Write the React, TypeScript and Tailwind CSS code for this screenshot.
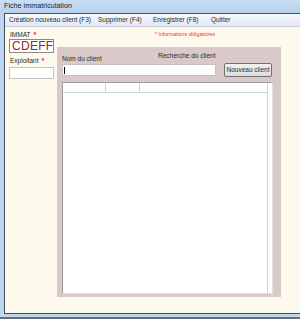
const MENU = [
  { label: "Création nouveau client (F3)", w: "w-[89px]" },
  { label: "Supprimer (F4)", w: "w-[55px]" },
  { label: "Enregistrer (F8)", w: "w-[58px]" },
  { label: "Quitter", w: "w-[40px]" },
];

function Required({ label }: { label: string }) {
  return (
    <div className="flex items-center gap-[3px] text-[6.5px] leading-[8px] text-[#2a2a2a]">
      <span>{label}</span>
      <span className="text-[7px] font-bold text-[#e8202a]">*</span>
    </div>
  );
}

export default function App() {
  return (
    <div
      className="w-[300px] h-[319px] overflow-hidden flex flex-col bg-[#bdd5ee]"
      style={{ fontFamily: '"Liberation Sans", Arial, sans-serif' }}
    >
      {/* Title bar */}
      <div className="h-[13px] flex items-center pl-[4px] text-[7.2px] text-[#222] bg-gradient-to-b from-[#c9def4] to-[#b8d0ea]">
        Fiche immatriculation
      </div>

      <div className="flex-1 flex pl-[4px] min-h-0">
        <div className="flex-1 flex flex-col border-l border-t border-b border-[#44505e] min-h-0">
          {/* Menu bar */}
          <div className="h-[13px] flex items-center pl-[4px] text-[6.5px] text-[#2a2a2a] bg-gradient-to-b from-[#f5f7fc] to-[#e3e8f3] border-b border-[#c9cfdc]">
            {MENU.map((m) => (
              <span key={m.label} className={`${m.w} shrink-0 whitespace-nowrap`}>
                {m.label}
              </span>
            ))}
          </div>

          {/* Content */}
          <div className="flex-1 flex bg-[#fdf9ec] min-h-0">
            {/* Left column */}
            <div className="w-[49px] shrink-0 pl-[4px] pt-[4px] flex flex-col">
              <div className="pl-[1px]">
                <Required label="IMMAT" />
              </div>
              <div className="w-[45px] h-[14px] bg-white border border-[#8a8a8a] flex items-center pl-[2px] text-[12px] leading-none tracking-[0.3px] text-[#9b2530]">
                CDEFF
              </div>
              <div className="pl-[1px] mt-[4px]">
                <Required label="Exploitant" />
              </div>
              <div className="mt-[2px] w-[45px] h-[12px] bg-white border border-[#c4c4c4]" />
            </div>

            {/* Right area */}
            <div className="w-[227px] shrink-0 pl-[3px] flex flex-col">
              <div className="h-[20px] pt-[4px] pl-[98px] text-[5.2px] text-[#ff2a2a] whitespace-nowrap">
                * Informations obligatoires
              </div>

              <div className="w-[224px] h-[250px] bg-[#d9c9c9] pl-[5px] pt-[5px] flex flex-col">
                <div className="flex h-[11px]">
                  <div className="w-[96px] self-end text-[6.5px] leading-[8px] text-[#2a2a2a]">
                    Nom du client
                  </div>
                  <div className="self-start text-[6.5px] leading-[8px] text-[#2a2a2a]">
                    Recherche du client
                  </div>
                </div>

                <div className="flex items-center h-[14px]">
                  <div className="w-[154px] h-[12px] bg-white border border-[#c8c0c0] flex items-center pl-[1px]">
                    <div className="w-px h-[7px] bg-black" />
                  </div>
                  <div className="ml-[8px] w-[48px] h-[14px] rounded-[2px] border border-[#707070] bg-gradient-to-b from-[#f2f2f2] to-[#dcdcdc] flex items-center justify-center text-[6.5px] text-[#2a2a2a]">
                    Nouveau client
                  </div>
                </div>

                {/* List */}
                <div className="mt-[5px] w-[211px] h-[212px] bg-white border-t border-l border-[#9c9c9c] border-r border-b border-r-[#e4e0e0] border-b-[#e4e0e0] flex">
                  <div className="w-[205px] border-r border-[#d4d4d4] flex flex-col">
                    <div className="h-[10px] flex border-b border-[#d4d4d4]">
                      <div className="w-[43px] border-r border-[#d4d4d4]" />
                      <div className="w-[34px] border-r border-[#d4d4d4]" />
                      <div className="flex-1" />
                    </div>
                  </div>
                </div>
              </div>
            </div>
          </div>
        </div>
      </div>

      {/* Bottom frame */}
      <div className="h-[3px] bg-[#bdd5ee]" />
      <div className="h-[2px] bg-[#6b7078]" />
    </div>
  );
}
